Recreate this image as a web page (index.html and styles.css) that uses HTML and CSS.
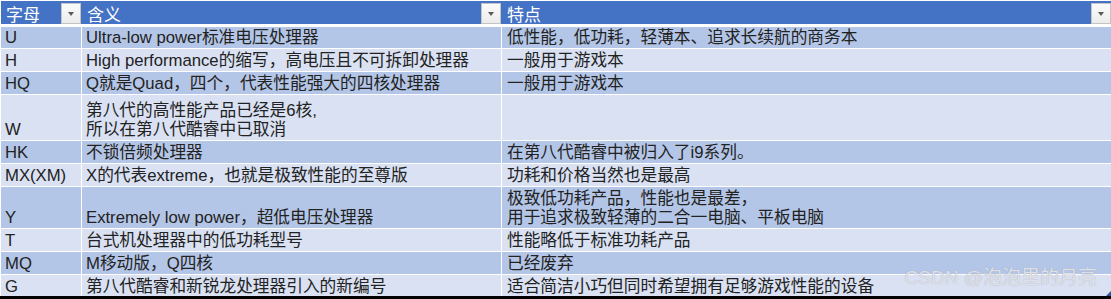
FILE: index.html
```html
<!DOCTYPE html>
<html lang="zh-CN">
<head>
<meta charset="utf-8">
<title>处理器后缀含义</title>
<link rel="stylesheet" href="styles.css">
</head>
<body>
<div class="sheet">
  <div class="head">
    <div class="hc"><span class="ht">字母</span><span class="dd"></span></div>
    <div class="hc"><span class="ht">含义</span><span class="dd"></span></div>
    <div class="hc"><span class="ht">特点</span><span class="dd"></span></div>
  </div>
  <div class="body">
    <div class="row dark r21"><div class="cell">U</div><div class="cell">Ultra-low power标准电压处理器</div><div class="cell c3">低性能，低功耗，轻薄本、追求长续航的商务本</div></div>
    <div class="row light"><div class="cell">H</div><div class="cell">High performance的缩写，高电压且不可拆卸处理器</div><div class="cell c3">一般用于游戏本</div></div>
    <div class="row dark"><div class="cell">HQ</div><div class="cell">Q就是Quad，四个，代表性能强大的四核处理器</div><div class="cell c3">一般用于游戏本</div></div>
    <div class="row light r45"><div class="cell">W</div><div class="cell">第八代的高性能产品已经是6核,<br>所以在第八代酷睿中已取消</div><div class="cell c3"></div></div>
    <div class="row dark"><div class="cell">HK</div><div class="cell">不锁倍频处理器</div><div class="cell c3">在第八代酷睿中被归入了i9系列。</div></div>
    <div class="row light"><div class="cell">MX(XM)</div><div class="cell">X的代表extreme，也就是极致性能的至尊版</div><div class="cell c3">功耗和价格当然也是最高</div></div>
    <div class="row dark r41"><div class="cell">Y</div><div class="cell">Extremely low power，超低电压处理器</div><div class="cell c3">极致低功耗产品，性能也是最差，<br>用于追求极致轻薄的二合一电脑、平板电脑</div></div>
    <div class="row light"><div class="cell">T</div><div class="cell">台式机处理器中的低功耗型号</div><div class="cell c3">性能略低于标准功耗产品</div></div>
    <div class="row dark"><div class="cell">MQ</div><div class="cell">M移动版，Q四核</div><div class="cell c3">已经废弃</div></div>
    <div class="row light"><div class="cell">G</div><div class="cell">第八代酷睿和新锐龙处理器引入的新编号</div><div class="cell c3">适合简洁小巧但同时希望拥有足够游戏性能的设备</div></div>
  </div>
  <div class="wm">CSDN @泡泡里的月亮</div>
  <div class="handle"></div>
</div>
</body>
</html>
```
FILE: styles.css
```css
html, body {
  margin: 0;
  padding: 0;
  background: #000;
}
body {
  width: 1111px;
  height: 299px;
  overflow: hidden;
}
.sheet {
  position: relative;
  box-sizing: border-box;
  height: 296px;
  padding: 1px 0 0 1px;
  background: #fff;
  overflow: hidden;
  font-family: "Liberation Sans", "Noto Sans CJK SC", sans-serif;
  font-size: 16.7px;
  color: #222;
}
.head {
  display: grid;
  grid-template-columns: 80px 419px 1fr;
  column-gap: 1px;
  height: 23px;
  margin-bottom: 3px;
  background: #4472c4;
}
.hc {
  display: flex;
  align-items: flex-end;
  justify-content: space-between;
  background: #4472c4;
  color: #fff;
  font-size: 17px;
  line-height: 17px;
  padding-left: 5px;
}
.ht {
  padding-bottom: 0;
}
.dd {
  position: relative;
  box-sizing: border-box;
  width: 20px;
  height: 21px;
  background: linear-gradient(#fbfbfb, #ececec);
  border: 1px solid #c4c4c4;
}
.dd::after {
  content: "";
  position: absolute;
  left: 6px;
  top: 8px;
  border-left: 3px solid transparent;
  border-right: 3px solid transparent;
  border-top: 4px solid #5a5a5a;
}
.body {
  display: flex;
  flex-direction: column;
  row-gap: 1px;
}
.row {
  display: grid;
  grid-template-columns: 80px 419px 1fr;
  column-gap: 1px;
  height: 22px;
  flex: none;
}
.row.r21 { height: 21px; }
.row.r45 { height: 45px; }
.row.r41 { height: 41px; }
.cell {
  display: flex;
  flex-direction: column;
  justify-content: flex-end;
  padding: 0 0 1px 4px;
  line-height: 19px;
  white-space: nowrap;
  overflow: hidden;
}
.cell.c3 {
  padding-left: 5px;
}
.dark .cell { background: #b4c6e7; }
.light .cell { background: #d9e1f2; }
.wm {
  position: absolute;
  right: 14px;
  top: 267px;
  font-size: 19px;
  line-height: 22px;
  color: #dfe0e6;
  text-shadow: 0 0 1px rgba(110, 110, 120, 0.45);
}
.handle {
  position: absolute;
  right: 0;
  bottom: 0;
  width: 0;
  height: 0;
  border-left: 5px solid transparent;
  border-bottom: 5px solid #2f5597;
}
```
